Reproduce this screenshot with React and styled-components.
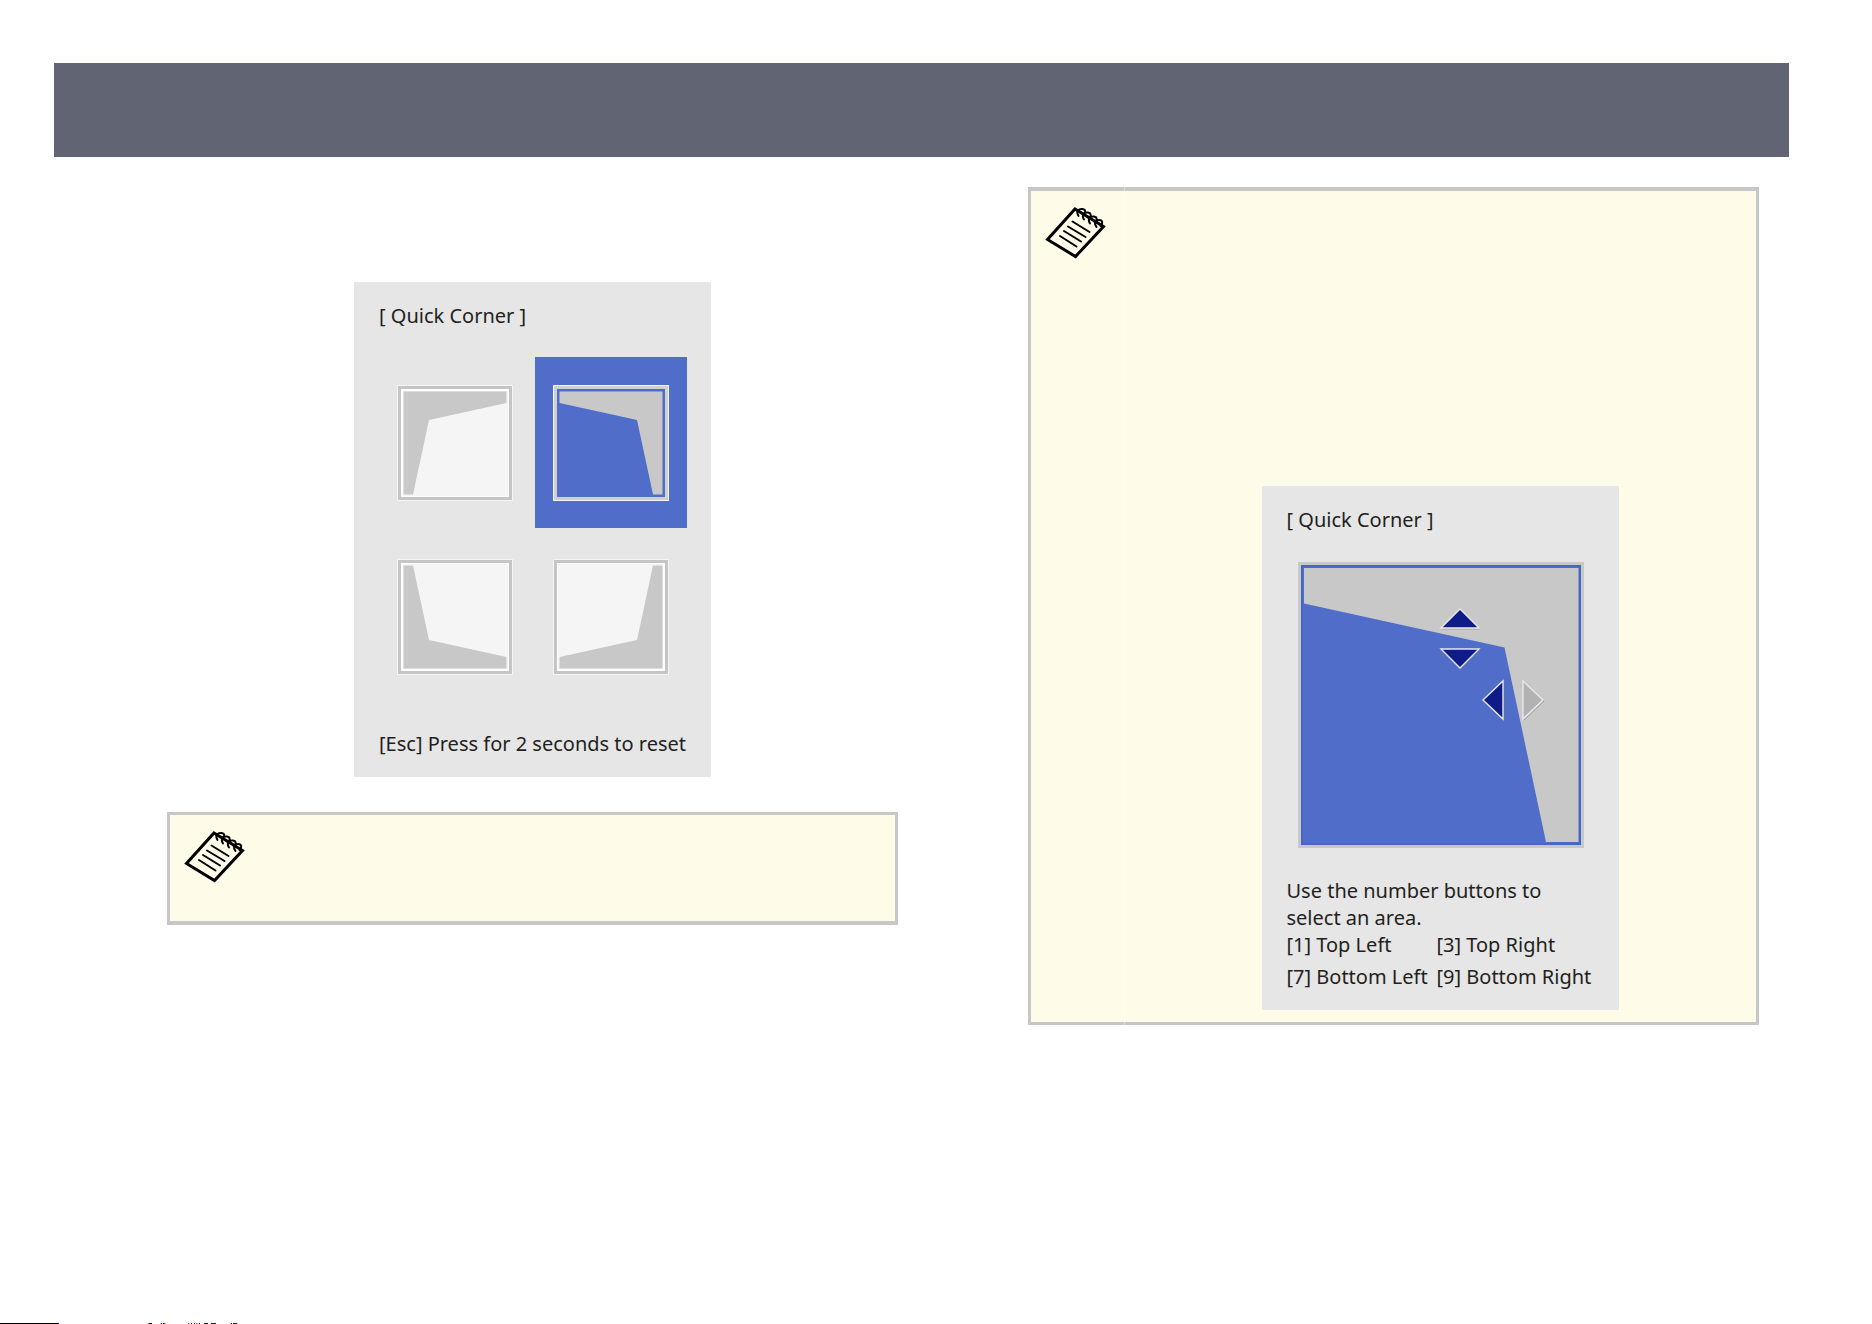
import React from 'react';
import styled, { createGlobalStyle } from 'styled-components';

const GlobalStyle = createGlobalStyle`
  body {
    margin: 0;
    background: #ffffff;
    color: #231f20;
    font-family: 'Noto Sans', 'Open Sans', sans-serif;
    font-size: 20px;
    line-height: 27px;
  }
`;

const Page = styled.div`
  box-sizing: border-box;
  min-height: 100vh;
  display: flex;
  flex-direction: column;
`;

const Banner = styled.header`
  height: 94px;
  margin: 63px 83px 0 54px;
  background: #616472;
`;

const Columns = styled.main`
  flex: 1;
  display: grid;
  grid-template-columns: 1fr 1fr;
  gap: 130px;
  align-items: start;
  padding: 30px 113px 0 167px;
`;

const Column = styled.section`
  display: flex;
  flex-direction: column;
  gap: 35px;
  padding-top: ${props => props.$offset || 0}px;
`;

const Note = styled.aside`
  display: grid;
  grid-template-columns: 93px 1fr;
  min-height: 106px;
  background: #fffbe9;
  border: 3px solid #c7c7c7;
  border-width: ${props => (props.$tall ? '4px 3px 3px' : '3px 3px 4px')};
`;

const NoteIcon = styled.div`
  padding: 13px;
`;

const NoteBody = styled.div`
  position: relative;
  padding: 295px 0 12px;

  &::before {
    content: '';
    position: absolute;
    top: -4px;
    bottom: -3px;
    left: 0;
    width: 1px;
    background: rgba(255, 255, 255, 0.4);
  }
`;

const Panel = styled.div`
  box-sizing: border-box;
  display: flex;
  flex-direction: column;
  gap: ${props => props.$gap}px;
  width: 357px;
  margin: 0 auto;
  padding: 20px 24px 20px 25px;
  background: #e6e6e6;
`;

const Text = styled.p`
  margin: 0;
`;

const Title = styled.h2`
  margin: 0;
  font-size: 20px;
  font-weight: 400;
`;

const Corners = styled.div`
  display: grid;
  grid-template-columns: 152px 152px;
  grid-auto-rows: 171px;
  gap: 3px 4px;
  justify-content: end;
`;

const CornerButton = styled.button`
  display: flex;
  justify-content: center;
  align-items: flex-start;
  padding: 28px 0 0;
  border: 0;
  background: ${props => (props.$selected ? '#4f6dc9' : 'transparent')};
`;

const Screen = styled.div`
  position: relative;
  width: 286px;
  height: 286px;
  margin: 0 auto;
`;

const Drawing = styled.svg`
  display: block;
`;

const ArrowButton = styled.button`
  position: absolute;
  left: ${props => props.$x}px;
  top: ${props => props.$y}px;
  padding: 0;
  border: 0;
  background: none;
`;

const Keys = styled.ul`
  display: grid;
  grid-template-columns: 150px 1fr;
  row-gap: 5px;
  margin: 0;
  padding: 0;
  list-style: none;
  white-space: nowrap;
`;

const Footer = styled.footer`
  height: 1px;
`;

const corners = [
  { name: 'Top left', flip: '' },
  { name: 'Top right', flip: 'translate(116 0) scale(-1 1)', selected: true },
  { name: 'Bottom left', flip: 'translate(0 116) scale(1 -1)' },
  { name: 'Bottom right', flip: 'translate(116 116) scale(-1 -1)' },
];

const arrows = [
  { name: 'Up', x: 141, y: 45, w: 42, h: 24, points: '2,21 21,2 40,21' },
  { name: 'Down', x: 141, y: 85, w: 42, h: 24, points: '2,2 40,2 21,21' },
  { name: 'Left', x: 183, y: 117, w: 24, h: 42, points: '22,2 22,40 2,21' },
  { name: 'Right', x: 223, y: 117, w: 24, h: 42, points: '2,2 2,40 22,21', disabled: true },
];

// x, width and colour of each mark along the bottom edge
const marks = [
  [0, 58, '#000000'],
  [58, 1, '#0000cc'],
  [148, 1, '#cc7755'],
  [149, 3, '#111111'],
  [160, 1, '#66ccdd'],
  [161, 1, '#222222'],
  [163, 1, '#111111'],
  [164, 1, '#dd2222'],
  [165, 1, '#88dddd'],
  [188, 1, '#dd3344'],
  [189, 1, '#88dddd'],
  [191, 1, '#111111'],
  [194, 1, '#2222cc'],
  [196, 1, '#dd2222'],
  [197, 1, '#66cccc'],
  [199, 1, '#222222'],
  [204, 4, '#222222'],
  [211, 5, '#222222'],
  [231, 1, '#222200'],
  [233, 4, '#332222'],
  [237, 1, '#88dddd'],
];

const NotepadIcon = () => (
  <Drawing width="64" height="56" fill="none" stroke="#000000" aria-hidden="true">
    <path d="M31 5 L59.5 22.5 L31.500 52.500 L3.500 35.500 Z" strokeWidth="3" />
    <path
      d="M28.5 17.5 L45.5 28 M24 22.5 L41.5 33 M20 27 L37 37.5 M16 32 L32.5 42.500"
      strokeWidth="2"
      strokeLinecap="round"
    />
    <path
      d="M34.5 12 C31.5 7 35 4.500 38.500 5 C42 5.500 42 9 39 10 M40 15.500 C37 11 40.500 8 44 8.500 C47.500 9 47.500 13 44.500 14 M46 19.500 C43 15 46.500 12 50 12.500 C53.500 13 53.500 17 50.500 18 M52.500 23 C49.500 19 52 16 55 16 C59 16 59 20 56.500 22"
      strokeWidth="2"
      strokeLinecap="round"
    />
  </Drawing>
);

const CornerIcon = ({ flip, selected }) => (
  <Drawing width="116" height="116" aria-hidden="true">
    <rect width="116" height="116" fill="#f5f5f5" />
    <rect x="1" y="1" width="114" height="114" fill={selected ? '#d0d0cc' : '#c5c5c5'} />
    <rect x="4" y="4" width="108" height="108" fill={selected ? '#4f6dc9' : '#ffffff'} />
    <g transform={flip}>
      <rect x="6" y="6" width="105" height="105" fill={selected ? '#4f6dc9' : '#f5f5f5'} />
      <path d="M6.500 6.500 H109.500 V18 L32 35 L16 109.500 H6.500 Z" fill="#c8c8c8" />
    </g>
  </Drawing>
);

const App = () => (
  <Page>
    <GlobalStyle />
    <Banner />
    <Columns>
      <Column $offset={95}>
        <Panel $gap={28}>
          <Title>[ Quick Corner ]</Title>
          <Corners>
            {corners.map(({ name, flip, selected }) => (
              <CornerButton
                key={name}
                type="button"
                aria-label={name}
                aria-pressed={!!selected}
                $selected={selected}
              >
                <CornerIcon flip={flip} selected={selected} />
              </CornerButton>
            ))}
          </Corners>
          <Text>[Esc] Press for 2 seconds to reset</Text>
        </Panel>
        <Note>
          <NoteIcon>
            <NotepadIcon />
          </NoteIcon>
        </Note>
      </Column>
      <Column>
        <Note $tall>
          <NoteIcon>
            <NotepadIcon />
          </NoteIcon>
          <NoteBody>
            <Panel $gap={29}>
              <Title>[ Quick Corner ]</Title>
              <Screen>
                <Drawing width="286" height="286" aria-hidden="true">
                  <rect width="286" height="286" fill="#c8c8c8" />
                  <rect x="3" y="3" width="280" height="280" fill="#4f6dc9" />
                  <path d="M6 6 H280.500 V280 H248 L206.500 85.500 L6 41.500 Z" fill="#c8c8c8" />
                  <rect x="4" y="4" width="278" height="278" fill="none" stroke="#4765c9" strokeWidth="2" />
                </Drawing>
                {arrows.map(({ name, x, y, w, h, points, disabled }) => (
                  <ArrowButton key={name} type="button" aria-label={name} disabled={disabled} $x={x} $y={y}>
                    <Drawing width={w} height={h} aria-hidden="true">
                      <polygon points={points} fill="none" stroke="#777777" strokeOpacity="0.5" transform="translate(1 1)" />
                      <polygon
                        points={points}
                        fill={disabled ? '#b2b2b2' : '#0f1c87'}
                        stroke="#e8e8e8"
                        strokeWidth="1.4"
                      />
                    </Drawing>
                  </ArrowButton>
                ))}
              </Screen>
              <div>
                <Text>
                  Use the number buttons to
                  <br />
                  select an area.
                </Text>
                <Keys>
                  <li>[1] Top Left</li>
                  <li>[3] Top Right</li>
                  <li>[7] Bottom Left</li>
                  <li>[9] Bottom Right</li>
                </Keys>
              </div>
            </Panel>
          </NoteBody>
        </Note>
      </Column>
    </Columns>
    <Footer>
      <Drawing width="240" height="1" aria-hidden="true">
        {marks.map(([x, width, fill]) => (
          <rect key={x} x={x} width={width} height="1" fill={fill} />
        ))}
      </Drawing>
    </Footer>
  </Page>
);

export default App;
